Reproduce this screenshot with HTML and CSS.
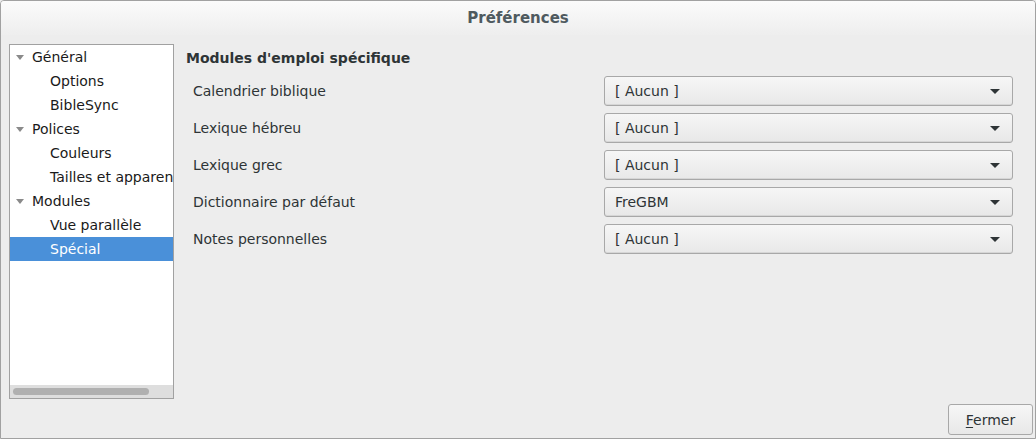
FILE: index.html
```html
<!DOCTYPE html>
<html lang="fr">
<head>
<meta charset="utf-8">
<link rel="stylesheet" href="styles.css">
<title>Préférences</title>
</head>
<body>
<div class="window">
  <div class="titlebar">Préférences</div>
  <div class="content">
    <div class="main">
      <div class="tree">
        <div class="tree-rows">
          <div class="row parent"><span class="exp"></span>Général</div>
          <div class="row child">Options</div>
          <div class="row child">BibleSync</div>
          <div class="row parent"><span class="exp"></span>Polices</div>
          <div class="row child">Couleurs</div>
          <div class="row child">Tailles et apparence</div>
          <div class="row parent"><span class="exp"></span>Modules</div>
          <div class="row child">Vue parallèle</div>
          <div class="row child selected">Spécial</div>
        </div>
        <div class="hscroll"><div class="thumb"></div></div>
      </div>
      <div class="panel">
        <div class="heading">Modules d'emploi spécifique</div>
        <div class="grid">
          <div class="label">Calendrier biblique</div>
          <div class="combo"><span>[ Aucun ]</span><span class="arrow"></span></div>
          <div class="label">Lexique hébreu</div>
          <div class="combo"><span>[ Aucun ]</span><span class="arrow"></span></div>
          <div class="label">Lexique grec</div>
          <div class="combo"><span>[ Aucun ]</span><span class="arrow"></span></div>
          <div class="label">Dictionnaire par défaut</div>
          <div class="combo"><span>FreGBM</span><span class="arrow"></span></div>
          <div class="label">Notes personnelles</div>
          <div class="combo"><span>[ Aucun ]</span><span class="arrow"></span></div>
        </div>
      </div>
    </div>
    <div class="actions">
      <button class="btn"><u>F</u>ermer</button>
    </div>
  </div>
</div>
</body>
</html>
```
FILE: styles.css
```css
html, body {
  margin: 0;
  padding: 0;
  background: #ededed;
}
body {
  font-family: "DejaVu Sans", sans-serif;
  font-size: 13px;
  color: #2e3436;
}
.window {
  width: 1036px;
  height: 439px;
  box-sizing: border-box;
  border: 1px solid #a1a1a1;
  border-radius: 4px 4px 0 0;
  display: flex;
  flex-direction: column;
  background: #ededed;
  overflow: hidden;
}
.titlebar {
  height: 34px;
  flex: none;
  display: flex;
  align-items: center;
  justify-content: center;
  font-weight: bold;
  color: #4f5a5f;
  background: linear-gradient(#fbfbfb, #eeeeee);
  font-size: 15px;
}
.content {
  flex: 1;
  display: flex;
  flex-direction: column;
  padding: 9px 2px 2px 8px;
}
.main {
  flex: 1;
  display: flex;
}
.tree {
  width: 165px;
  height: 355px;
  box-sizing: border-box;
  border: 1px solid #a1a1a1;
  background: #fff;
  display: flex;
  flex-direction: column;
  overflow: hidden;
}
.tree-rows {
  flex: 1;
}
.row {
  height: 24px;
  line-height: 24px;
  white-space: nowrap;
  color: #1a1a1a;
  font-size: 14px;
}
.row.parent {
  padding-left: 6px;
  display: flex;
  align-items: center;
}
.row.child {
  padding-left: 40px;
}
.row.selected {
  background: #4a90d9;
  color: #fff;
}
.exp {
  width: 0;
  height: 0;
  border-left: 4.5px solid transparent;
  border-right: 4.5px solid transparent;
  border-top: 5px solid #8a8a8a;
  margin-right: 8px;
  margin-top: 1px;
}
.hscroll {
  height: 13px;
  background: #dedede;
  display: flex;
  align-items: center;
  padding-left: 3px;
}
.thumb {
  width: 136px;
  height: 7px;
  border-radius: 4px;
  background: #b0b0b0;
}
.panel {
  flex: 1;
  padding-left: 12px;
  padding-top: 5px;
}
.heading {
  font-weight: bold;
  font-size: 14px;
  height: 20px;
  line-height: 18px;
}
.grid {
  display: grid;
  grid-template-columns: 1fr 409px;
  row-gap: 7px;
  margin-top: 7px;
  padding-left: 7px;
  padding-right: 20px;
}
.label {
  display: flex;
  align-items: center;
  height: 30px;
  color: #2e3436;
  font-size: 14px;
}
.combo {
  height: 30px;
  box-sizing: border-box;
  border: 1px solid #a8a8a8;
  border-radius: 3px;
  background: linear-gradient(#f6f6f6, #e8e8e8);
  display: flex;
  align-items: center;
  justify-content: space-between;
  padding: 0 12px 0 10px;
  font-size: 14px;
  color: #2e3436;
  box-shadow: inset 0 -1px 0 #d6d6d6;
}
.arrow {
  width: 0;
  height: 0;
  border-left: 5px solid transparent;
  border-right: 5px solid transparent;
  border-top: 5px solid #2e3436;
}
.actions {
  display: flex;
  justify-content: flex-end;
  height: 32px;
}
.btn {
  font-family: "DejaVu Sans", sans-serif;
  font-size: 14px;
  color: #2e3436;
  width: 85px;
  height: 31px;
  border: 1px solid #a8a8a8;
  border-radius: 3px;
  background: linear-gradient(#f6f6f6, #e8e8e8);
  padding: 0;
}
.btn u {
  text-decoration-thickness: 1px;
  text-underline-offset: 2px;
}
```
